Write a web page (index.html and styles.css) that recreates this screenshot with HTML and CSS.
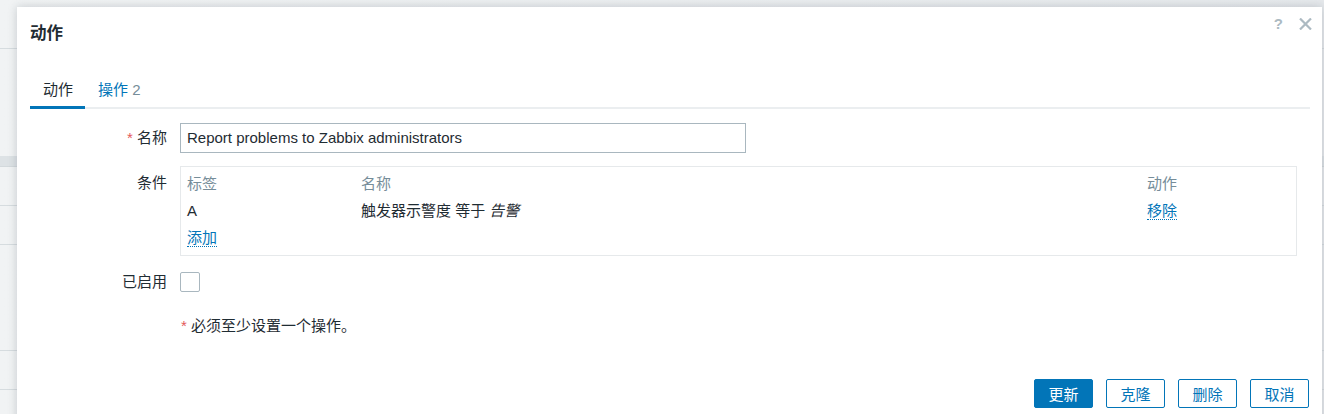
FILE: index.html
```html
<!DOCTYPE html>
<html lang="zh">
<head>
<meta charset="utf-8">
<title>动作</title>
<link rel="stylesheet" href="styles.css">
</head>
<body>
<div class="page">
  <div class="pg-row pg-top"></div>
  <div class="pg-row pg-r1"></div>
  <div class="pg-row pg-band"></div>
  <div class="pg-row pg-r2"></div>
  <div class="pg-row pg-r2"></div>
  <div class="pg-row pg-r3"></div>
  <div class="pg-row pg-r2"></div>
  <div class="pg-row pg-rest"></div>
</div>

<div class="dialog">
  <div class="dlg-head">
    <h4 class="dlg-title">动作</h4>
    <div class="dlg-ctrls">
      <span class="help">?</span>
      <svg class="close" width="13" height="12" viewBox="0 0 13 12"><path d="M1 0.5 L12 11.5 M12 0.5 L1 11.5" stroke="#acbac2" stroke-width="2.2" fill="none"/></svg>
    </div>
  </div>

  <ul class="tabs">
    <li class="tab active">动作</li>
    <li class="tab">操作 <span class="tab-count">2</span></li>
  </ul>

  <div class="form">
    <div class="frow frow-name">
      <label class="flabel"><span class="req">*</span> 名称</label>
      <div class="ffield"><div class="input">Report problems to Zabbix administrators</div></div>
    </div>

    <div class="frow frow-cond">
      <label class="flabel flabel-top">条件</label>
      <div class="ffield">
        <div class="cond-box">
          <div class="cond-grid">
            <div class="cond-cell cond-head">标签</div>
            <div class="cond-cell cond-head">名称</div>
            <div class="cond-cell cond-head">动作</div>
            <div class="cond-cell">A</div>
            <div class="cond-cell">触发器示警度 等于 <em>告警</em></div>
            <div class="cond-cell"><a class="link">移除</a></div>
            <div class="cond-cell cond-add"><a class="link">添加</a></div>
          </div>
        </div>
      </div>
    </div>

    <div class="frow frow-check">
      <label class="flabel">已启用</label>
      <div class="ffield"><span class="checkbox"></span></div>
    </div>

    <div class="frow frow-note">
      <div class="flabel"></div>
      <div class="ffield note"><span class="req">*</span> 必须至少设置一个操作。</div>
    </div>
  </div>

  <div class="dlg-foot">
    <button class="btn btn-primary">更新</button>
    <button class="btn">克隆</button>
    <button class="btn">删除</button>
    <button class="btn">取消</button>
  </div>
</div>
</body>
</html>
```

FILE: styles.css
```css
* { box-sizing: border-box; }

html, body {
  margin: 0;
  padding: 0;
  height: 414px;
  overflow: hidden;
}

body {
  font-family: "Liberation Sans", "Noto Sans CJK SC", sans-serif;
  font-size: 15px;
  color: #1f2c33;
  background: #e9ecee;
  position: relative;
}

/* page behind the dialog */
.page {
  width: 100%;
  background: linear-gradient(90deg, #f1f3f4 0, #e6e9ec 100%);
}
.pg-row { border-bottom: 1px solid #d6dcdf; }
.pg-top { height: 49px; }
.pg-r1 { height: 107px; border-bottom: none; }
.pg-band { height: 11px; background: #dde2e5; border-bottom: 1px solid #d3d9dc; }
.pg-r2 { height: 39px; }
.pg-r3 { height: 106px; }
.pg-rest { height: 40px; border-bottom: none; }

/* dialog */
.dialog {
  position: absolute;
  left: 17px;
  top: 7px;
  width: 1305px;
  height: 430px;
  background: #fff;
  box-shadow: 0 0 9px rgba(40, 60, 75, 0.22);
  padding: 0 13px;
}

.dlg-head {
  display: flex;
  justify-content: space-between;
  align-items: flex-start;
  height: 48px;
  padding-top: 16px;
}
.dlg-title {
  margin: 0;
  font-size: 16.5px;
  line-height: 20px;
  font-weight: bold;
  color: #1f2c33;
}
.dlg-ctrls {
  display: flex;
  align-items: center;
  gap: 16px;
  margin-top: -7px;
  margin-right: -3px;
}
.help {
  color: #acbac2;
  font-size: 15px;
  line-height: 16px;
  font-weight: bold;
}
.close { display: block; }

/* tabs */
.tabs {
  list-style: none;
  margin: 25px 0 0;
  padding: 0;
  display: flex;
  border-bottom: 2px solid #ebeef0;
  width: 1280px;
}
.tab {
  padding: 0 12px 6px 13px;
  line-height: 20px;
  color: #0275b8;
  border-bottom: 3px solid transparent;
  margin-bottom: -2px;
}
.tab.active {
  color: #1f2c33;
  border-bottom-color: #0275b8;
}
.tab-count { color: #768d99; }

/* form */
.form { padding-top: 14px; }
.frow {
  display: flex;
  gap: 13px;
}
.flabel {
  width: 137px;
  flex: none;
  text-align: right;
  line-height: 20px;
}
.req { color: #e45959; }

.frow-name { align-items: center; height: 30px; }
.input {
  width: 566px;
  height: 30px;
  border: 1px solid #a9b7bf;
  padding: 0 6px;
  line-height: 28px;
  white-space: nowrap;
}

.frow-cond { margin-top: 13px; }
.flabel-top { padding-top: 7px; }
.cond-box {
  width: 1117px;
  height: 90px;
  border: 1px solid #e6e9eb;
  padding: 3px 6px 0;
}
.cond-grid {
  display: grid;
  grid-template-columns: 174px 786px 1fr;
  grid-auto-rows: 27px;
  align-items: center;
}
.cond-cell { line-height: 20px; white-space: nowrap; }
.cond-head { color: #768d99; }
.cond-add { grid-column: 1 / 4; }
.cond-cell em { font-style: italic; }
.link {
  color: #0275b8;
  border-bottom: 1px dotted #0275b8;
  cursor: pointer;
}

.frow-check { margin-top: 16px; align-items: center; height: 20px; }
.checkbox {
  display: block;
  width: 20px;
  height: 20px;
  border: 1px solid #a9b7bf;
  border-radius: 2px;
}

.frow-note { margin-top: 24px; }
.note { line-height: 20px; padding-left: 1px; }

/* footer */
.dlg-foot {
  display: flex;
  justify-content: flex-end;
  gap: 13px;
  margin-top: 43px;
}
.btn {
  width: 59px;
  height: 29px;
  font-family: "Liberation Sans", "Noto Sans CJK SC", sans-serif;
  font-size: 15px;
  color: #0275b8;
  background: #fff;
  border: 1px solid #0275b8;
  border-radius: 2px;
  padding: 0;
}
.btn-primary {
  background: #0275b8;
  color: #fff;
}
```
